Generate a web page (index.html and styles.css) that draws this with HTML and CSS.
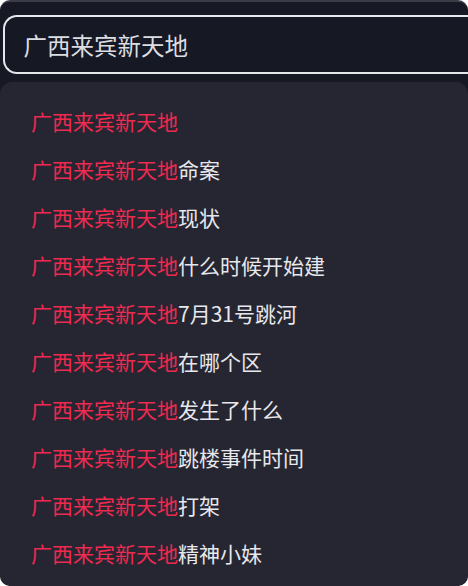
FILE: index.html
```html
<!DOCTYPE html>
<html lang="zh-CN">
<head>
    <meta charset="UTF-8">
    <meta name="viewport" content="width=device-width, initial-scale=1.0">
    <title>搜索</title>
    <link rel="stylesheet" href="styles.css">
</head>
<body>
    <div class="screen">
        <div class="search-bar">
            <div class="search-input">广西来宾新天地</div>
        </div>

        <ul class="suggestions">
            <li><span class="hit">广西来宾新天地</span></li>
            <li><span class="hit">广西来宾新天地</span>命案</li>
            <li><span class="hit">广西来宾新天地</span>现状</li>
            <li><span class="hit">广西来宾新天地</span>什么时候开始建</li>
            <li><span class="hit">广西来宾新天地</span>7月31号跳河</li>
            <li><span class="hit">广西来宾新天地</span>在哪个区</li>
            <li><span class="hit">广西来宾新天地</span>发生了什么</li>
            <li><span class="hit">广西来宾新天地</span>跳楼事件时间</li>
            <li><span class="hit">广西来宾新天地</span>打架</li>
            <li><span class="hit">广西来宾新天地</span>精神小妹</li>
        </ul>
    </div>
</body>
</html>
```

FILE: styles.css
```css
html, body {
    margin: 0;
    padding: 0;
    background: #ffffff;
}

body {
    font-family: "Noto Sans CJK SC", "Noto Sans", sans-serif;
}

.screen {
    width: 468px;
    height: 586px;
    background: #161823;
    border-top: 2px solid #3b3c46;
    border-radius: 10px;
    box-sizing: border-box;
    overflow: hidden;
}

.search-bar {
    padding: 13px 0 0 3px;
    height: 80px;
    box-sizing: border-box;
}

.search-input {
    height: 59px;
    box-sizing: border-box;
    border: 2.5px solid #e6e7ec;
    border-right: none;
    border-radius: 14px 0 0 14px;
    padding-left: 18.5px;
    display: flex;
    align-items: center;
    font-size: 23.5px;
    color: #dcdde2;
}

.suggestions {
    list-style: none;
    margin: 0;
    padding: 15px 0 8px;
    background: #252632;
    border-radius: 12px;
    height: 504px;
    box-sizing: border-box;
}

.suggestions li {
    height: 48px;
    display: flex;
    align-items: center;
    padding-left: 31px;
    font-size: 21px;
    color: #e8e8ec;
    white-space: nowrap;
}

.hit {
    color: #f0294f;
}
```
